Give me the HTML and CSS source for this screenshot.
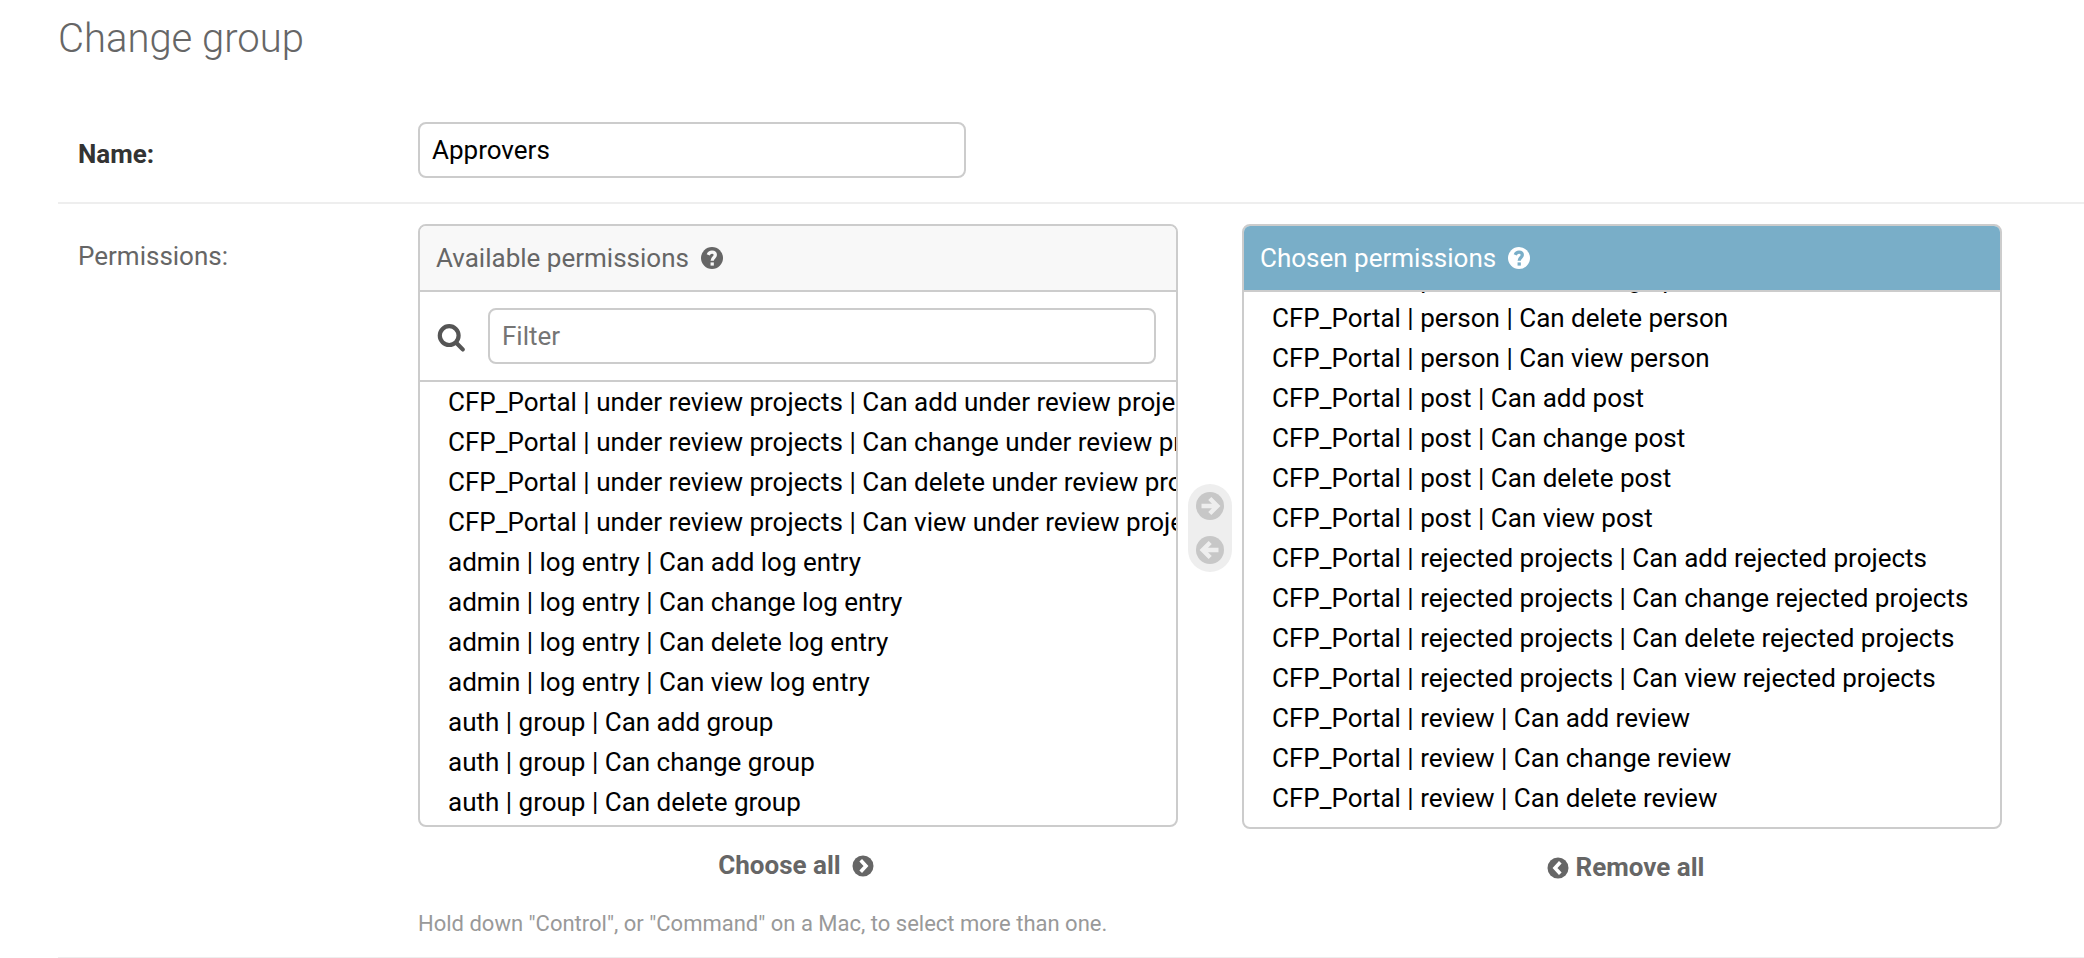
FILE: index.html
```html
<!DOCTYPE html>
<html lang="en">
<head>
<meta charset="utf-8">
<title>Change group</title>
<link rel="stylesheet" href="styles.css">
</head>
<body>
<main class="content">
  <h1 class="title">Change group</h1>
  <form>
    <div class="form-row name-row">
      <label class="label required" for="name">Name:</label>
      <input class="text-field" id="name" type="text" value="Approvers">
    </div>
    <div class="form-row permissions-row">
      <span class="label">Permissions:</span>
      <div class="field">
        <div class="selector">
          <section class="column">
            <div class="box available">
              <h2 class="box-title">Available permissions
                <svg class="help" viewBox="0 0 22 22"><circle cx="11" cy="11" r="11" fill="currentColor"/><path class="cut" d="M7.200 7.800C8 5.900 9.300 5.200 11 5.200C13 5.200 14.300 6.400 14.300 8.100C14.300 10.500 11.200 10.500 11.200 13.700"/><path class="cut" d="M11.200 15.400V18.600"/></svg>
              </h2>
              <div class="filter">
                <svg class="search" viewBox="0 0 28 28"><circle cx="12.200" cy="11.600" r="9.400"/><path d="M19.200 18.800L25.700 25.400"/></svg>
                <input class="text-field" type="text" placeholder="Filter">
              </div>
              <ul class="options">
                <li>CFP_Portal | under review projects | Can add under review projects</li>
                <li>CFP_Portal | under review projects | Can change under review projects</li>
                <li>CFP_Portal | under review projects | Can delete under review projects</li>
                <li>CFP_Portal | under review projects | Can view under review projects</li>
                <li>admin | log entry | Can add log entry</li>
                <li>admin | log entry | Can change log entry</li>
                <li>admin | log entry | Can delete log entry</li>
                <li>admin | log entry | Can view log entry</li>
                <li>auth | group | Can add group</li>
                <li>auth | group | Can change group</li>
                <li>auth | group | Can delete group</li>
              </ul>
            </div>
            <a class="all choose-all">Choose all
              <svg viewBox="0 0 22 22"><circle cx="11" cy="11" r="10.500" fill="currentColor"/><path class="chevron" d="M8.700 5.200L14 11L8.700 16.800"/></svg>
            </a>
          </section>
          <div class="chooser">
            <svg viewBox="0 0 28 28"><circle cx="14" cy="14" r="14"/><path d="M5.500 14H21M13.800 6.500L21.300 14L13.800 21.500"/></svg>
            <svg viewBox="0 0 28 28"><circle cx="14" cy="14" r="14"/><path d="M22.500 14H7M14.200 6.500L6.700 14L14.200 21.500"/></svg>
          </div>
          <section class="column">
            <div class="box chosen">
              <h2 class="box-title">Chosen permissions
                <svg class="help" viewBox="0 0 22 22"><circle cx="11" cy="11" r="11" fill="currentColor"/><path class="cut" d="M7.200 7.800C8 5.900 9.300 5.200 11 5.200C13 5.200 14.300 6.400 14.300 8.100C14.300 10.500 11.200 10.500 11.200 13.700"/><path class="cut" d="M11.200 15.400V18.600"/></svg>
              </h2>
              <ul class="options">
                <li>CFP_Portal | person | Can change person</li>
                <li>CFP_Portal | person | Can delete person</li>
                <li>CFP_Portal | person | Can view person</li>
                <li>CFP_Portal | post | Can add post</li>
                <li>CFP_Portal | post | Can change post</li>
                <li>CFP_Portal | post | Can delete post</li>
                <li>CFP_Portal | post | Can view post</li>
                <li>CFP_Portal | rejected projects | Can add rejected projects</li>
                <li>CFP_Portal | rejected projects | Can change rejected projects</li>
                <li>CFP_Portal | rejected projects | Can delete rejected projects</li>
                <li>CFP_Portal | rejected projects | Can view rejected projects</li>
                <li>CFP_Portal | review | Can add review</li>
                <li>CFP_Portal | review | Can change review</li>
                <li>CFP_Portal | review | Can delete review</li>
              </ul>
            </div>
            <a class="all remove-all">
              <svg viewBox="0 0 22 22"><circle cx="11" cy="11" r="10.500" fill="currentColor"/><path class="chevron" d="M13.300 5.200L8 11L13.300 16.800"/></svg>
              Remove all</a>
          </section>
        </div>
        <p class="hint">Hold down "Control", or "Command" on a Mac, to select more than one.</p>
      </div>
    </div>
  </form>
</main>
</body>
</html>
```
FILE: styles.css
```css
* {
  box-sizing: border-box;
}

body {
  margin: 0;
  height: 958px;
  overflow: hidden;
  background: #fff;
  color: #666;
  font: 26px/40px Roboto, "Liberation Sans", sans-serif;
}

.content {
  padding-left: 58px;
}

.title {
  margin: 0;
  height: 102px;
  padding-top: 15px;
  font-size: 40px;
  line-height: 48px;
  font-weight: 300;
}

.form-row {
  display: flex;
  align-items: flex-start;
  padding: 20px 0 0 20px;
  border-bottom: 2px solid #eee;
}

.name-row {
  height: 102px;
}

.permissions-row {
  height: 755px;
}

.label {
  width: 340px;
  flex: none;
  padding-top: 12px;
}

.required {
  color: #333;
  font-weight: 700;
}

.text-field {
  width: 548px;
  height: 56px;
  margin: 0;
  padding: 0 12px;
  border: 2px solid #ccc;
  border-radius: 8px;
  background: #fff;
  color: #000;
  font: inherit;
}

.text-field::placeholder {
  color: #757575;
  opacity: 1;
}

.selector {
  display: flex;
  align-items: flex-start;
}

.column {
  width: 760px;
}

.box {
  display: flex;
  flex-direction: column;
  overflow: hidden;
  border: 2px solid #ccc;
  border-radius: 8px;
}

.available {
  height: 603px;
}

.chosen {
  height: 605px;
}

.box-title {
  display: flex;
  align-items: center;
  gap: 12px;
  flex: none;
  height: 66px;
  margin: 0;
  padding: 0 16px;
  border-bottom: 2px solid #ccc;
  background: #f8f8f8;
  font-size: 26px;
  font-weight: 400;
}

.chosen .box-title {
  background: #79aec8;
  color: #fff;
}

.help {
  width: 22px;
  height: 22px;
}

.cut {
  fill: none;
  stroke: #f8f8f8;
  stroke-width: 3.3;
}

.chosen .cut {
  stroke: #79aec8;
}

.filter {
  display: flex;
  align-items: center;
  gap: 23px;
  flex: none;
  height: 90px;
  padding: 0 20px 0 17px;
  border-bottom: 2px solid #ccc;
}

.filter .text-field {
  flex: 1;
}

.search {
  width: 28px;
  height: 28px;
  margin-top: 4px;
  fill: none;
  stroke: #555;
  stroke-width: 4.2;
  stroke-linecap: round;
}

.options {
  flex: 1;
  min-height: 0;
  margin: 0;
  padding: 0 0 0 28px;
  overflow: hidden;
  list-style: none;
  color: #000;
  white-space: nowrap;
}

/* The chosen list is scrolled part-way past its first option. */
.chosen .options li:first-child {
  margin: -33px 0 -1px;
}

.chooser {
  display: grid;
  gap: 16px;
  width: 44px;
  height: 88px;
  margin: 260px 10px 0;
  padding: 8px;
  border-radius: 22px;
  background: #eee;
}

.chooser svg {
  width: 28px;
  height: 28px;
  fill: #c7c7c7;
}

.chooser path {
  fill: none;
  stroke: #eee;
  stroke-width: 4.4;
}

.all {
  display: flex;
  justify-content: center;
  align-items: center;
  height: 40px;
  margin-top: 18px;
  font-weight: 700;
}

.all svg {
  width: 22px;
  height: 22px;
  margin-top: 2px;
}

.chevron {
  fill: none;
  stroke: #fff;
  stroke-width: 3.6;
}

.choose-all {
  gap: 11px;
  padding-right: 4px;
}

.remove-all {
  gap: 7px;
  padding-left: 7px;
}

.hint {
  margin: 21px 0 0;
  color: #999;
  font-size: 22px;
  line-height: 32px;
}
```
